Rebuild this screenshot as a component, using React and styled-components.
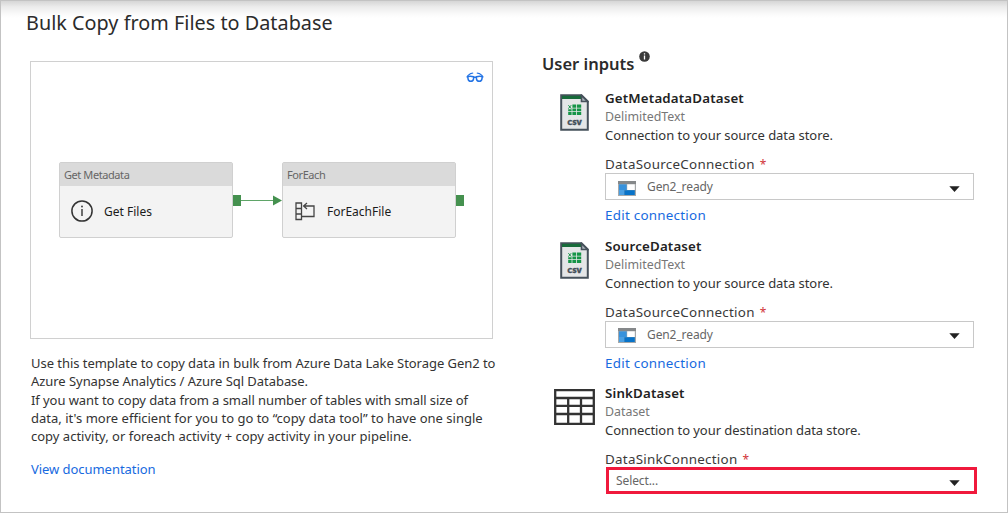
import React from "react";
import styled, { createGlobalStyle } from "styled-components";

const GlobalStyle = createGlobalStyle`
  * { box-sizing: border-box; }
  body { margin: 0; background: #fff; }
`;

const Page = styled.div`
  display: flex;
  width: 1008px;
  height: 513px;
  overflow: hidden;
  border: 1px solid #c3c3c3;
  background: linear-gradient(#d6d6d6 0, #ececec 6px, #fafafa 13px, #fff 17px);
  font-family: "Noto Sans", "Open Sans", sans-serif;
  font-size: 13px;
  color: #333;
  white-space: nowrap;
`;

const Left = styled.section`
  width: 511px;
  padding: 8px 0 0 25px;
`;

const Title = styled.h1`
  margin: 0;
  height: 52px;
  line-height: 27px;
  font-size: 19.8px;
  font-weight: 400;
  letter-spacing: 0.03px;
  color: #2b2b2b;
`;

const Canvas = styled.div`
  position: relative;
  margin-left: 4px;
  width: 463px;
  height: 278px;
  border: 1px solid #d0d0d0;
  background: #fff;
`;

const Glasses = styled.svg`
  position: absolute;
  left: 435px;
  top: 9px;
`;

const Node = styled.div`
  position: absolute;
  left: ${(p) => p.$x}px;
  top: 100px;
  width: 174px;
  height: 76px;
  border: 1px solid #d0d0d0;
  border-radius: 2px;
  background: #f3f3f3;
`;

const NodeHead = styled.div`
  height: 23px;
  padding-left: 4px;
  line-height: 24px;
  background: #dadada;
  color: #666;
  font-size: 11px;
  letter-spacing: -0.42px;
`;

const NodeBody = styled.div`
  display: flex;
  align-items: center;
  height: 50px;
  padding-left: 10px;
  color: #1b1b1b;
  font-size: 12px;
  svg { margin-right: 10px; }
`;

const Port = styled.span`
  position: absolute;
  left: ${(p) => p.$x}px;
  top: 133px;
  width: 8px;
  height: 11px;
  background: #45914f;
`;

const Arrow = styled.svg`
  position: absolute;
  left: 210px;
  top: 133px;
`;

const Description = styled.div`
  margin: 15px 0 0 5px;
`;

const Line = styled.div`
  height: 18.3px;
  line-height: 18.3px;
  letter-spacing: ${(p) => p.$ls || 0}px;
`;

const Link = styled.a`
  display: block;
  height: 18px;
  line-height: 18px;
  color: #176ae0;
`;

const DocLink = styled(Link)`
  margin: 15px 0 0 5px;
  letter-spacing: -0.05px;
`;

const Right = styled.section`
  flex: 1;
  padding-top: 50px;
`;

const Heading = styled.h2`
  display: flex;
  margin: 0;
  height: 38px;
  padding-left: 30px;
  line-height: 26px;
  font-size: 16.5px;
  font-weight: 600;
  color: #2b2b2b;
  svg { margin-left: 5px; }
`;

const Dataset = styled.article`
  display: grid;
  grid-template-columns: 93px 371px;
  height: 147.5px;
`;

const IconCell = styled.div`
  padding: ${(p) => p.$pad};
  svg { display: block; }
`;

const Name = styled.div`
  height: 19px;
  line-height: 19px;
  font-size: 13.3px;
  font-weight: 600;
  color: #222;
  letter-spacing: 0.17px;
`;

const Kind = styled.div`
  height: 18px;
  line-height: 18px;
  font-size: 12.4px;
  color: #777;
`;

const Info = styled.div`
  height: 18px;
  line-height: 18px;
  letter-spacing: -0.05px;
`;

const Label = styled.div`
  height: 29px;
  padding-top: 11px;
  line-height: 18px;
  font-size: 13.4px;
  letter-spacing: 0.27px;
  color: #3a3a3a;
`;

const Required = styled.span`
  margin-left: 5px;
  font-size: 12px;
  color: #d13438;
`;

const Select = styled.div`
  display: flex;
  align-items: center;
  justify-content: space-between;
  width: ${(p) => (p.$alert ? 371 : 369)}px;
  height: 27px;
  margin-top: ${(p) => (p.$alert ? -1 : 0)}px;
  margin-left: ${(p) => (p.$alert ? 1 : 0)}px;
  padding: ${(p) => (p.$alert ? "0 14px 0 7px" : "0 13px 0 12px")};
  border: ${(p) => (p.$alert ? "3px solid #f0193c" : "1px solid #c8c8c8")};
  color: #666;
  font-size: 12px;
`;

const Value = styled.span`
  display: flex;
  align-items: center;
  letter-spacing: -0.1px;
  svg { margin: 3px 11px 0 0; }
`;

const Caret = styled.svg`
  margin-top: 4px;
`;

const EditLink = styled(Link)`
  margin-top: 6px;
  font-size: 13.4px;
  letter-spacing: 0.25px;
`;

const CsvIcon = () => (
  <svg width="29" height="37" viewBox="0 0 29 37">
    <path d="M1.2 1.2H21.5L27.8 7.5V35.8H1.2Z" fill="#e4e6e7" stroke="#46515b" strokeWidth="2" />
    <path d="M2 1.8H21.5V5H2Z" fill="#176b3a" />
    <path d="M21.5 1.5V7.5H27.5Z" fill="#aab4ba" stroke="#46515b" strokeWidth="1.6" />
    <path
      d="M12.4 10.6h3.8v3.2h-3.8zM17 10.6h4.2v3.2H17zM12.4 14.6h3.8v2.6h-3.8zM17 14.6h4.2v2.6H17zM8.2 18h3.4v3H8.2zM12.4 18h3.8v3h-3.8zM17 18h4.2v3H17zM8.2 15.2h3.4v2H8.2z"
      fill="#159447"
    />
    <path d="M8.4 11.2L11.2 14.6M11.2 11.2L8.4 14.6" stroke="#159447" strokeWidth="1" />
    <text x="14.5" y="31.4" textAnchor="middle" fontFamily="Noto Sans, sans-serif" fontWeight="900" fontSize="7.6" fill="#46515b" stroke="#46515b" strokeWidth="0.3">CSV</text>
  </svg>
);

const TableIcon = () => (
  <svg width="41" height="36" viewBox="0 0 41 36" fill="none" stroke="#333" strokeWidth="2.3">
    <path d="M1.2 1.2H39.8V34.8H1.2Z" />
    <path d="M1 9H40M1 16.8H40M1 25H40M14.2 9V35M27 9V35" />
  </svg>
);

const StorageIcon = () => (
  <svg width="18" height="15" viewBox="0 0 18 15">
    <path d="M0 0H18V15H0Z" fill="#a5a8aa" />
    <path d="M0 0H18V3H0Z" fill="#85888a" />
    <path d="M1 3.3H8.7V9H1Z" fill="#3892dc" />
    <path d="M9.2 3.3H16.8V9H9.2Z" fill="#fff" />
    <path d="M1 9H6.3V14H1Z" fill="#4ba0e3" />
    <path d="M6.3 9.2H16.8V14H6.3Z" fill="#0873c9" />
  </svg>
);

const CaretIcon = () => (
  <Caret width="11" height="6" viewBox="0 0 11 6">
    <path d="M0.3 0.2H10.7L5.5 6Z" fill="#222" />
  </Caret>
);

const DatasetInput = ({ icon, pad, name, kind, info, label, value }) => (
  <Dataset>
    <IconCell $pad={pad}>{icon}</IconCell>
    <div>
      <Name>{name}</Name>
      <Kind>{kind}</Kind>
      <Info>{info}</Info>
      <Label>{label}<Required>*</Required></Label>
      <Select $alert={!value}>
        <Value>{value ? <><StorageIcon />{value}</> : "Select..."}</Value>
        <CaretIcon />
      </Select>
      {value && <EditLink>Edit connection</EditLink>}
    </div>
  </Dataset>
);

export default function App() {
  return (
    <>
      <GlobalStyle />
      <Page>
        <Left>
          <Title>Bulk Copy from Files to Database</Title>
          <Canvas>
            <Glasses width="18" height="12" viewBox="0 0 18 12" fill="none" stroke="#2474e5" strokeWidth="1.5">
              <path d="M1.8 5.6Q4.6 4.8 7.6 5.8V7.6C7.2 11.2 2.4 11.2 2 7.6ZM16.2 5.6Q13.4 4.8 10.4 5.8V7.6C10.8 11.2 15.6 11.2 16 7.6ZM7.6 6.2H10.4" />
              <path d="M0.5 5.8H2M16 5.8H17.5M1.4 5L4.6 2.6L7.2 2M16.6 5L13.4 2.6L10.8 2" strokeWidth="1.2" />
            </Glasses>
            <Node $x={28}>
              <NodeHead>Get Metadata</NodeHead>
              <NodeBody>
                <svg width="24" height="24" viewBox="0 0 24 24">
                  <circle cx="12" cy="12" r="10.1" fill="none" stroke="#333" strokeWidth="1.5" />
                  <path d="M12 10V17" stroke="#333" strokeWidth="1.4" />
                  <circle cx="12" cy="7.5" r="0.9" fill="#333" />
                </svg>
                Get Files
              </NodeBody>
            </Node>
            <Arrow width="41" height="11" viewBox="0 0 41 11">
              <path d="M0 5.5H33" stroke="#5fa568" strokeWidth="1" />
              <path d="M32 0.6L41 5.5L32 10.4Z" fill="#45914f" />
            </Arrow>
            <Node $x={251}>
              <NodeHead>ForEach</NodeHead>
              <NodeBody>
                <svg width="24" height="24" viewBox="0 0 24 24" fill="none" stroke="#444" strokeWidth="1.3">
                  <path d="M3 4H8.5V20.5H3ZM3 9.5H8.5M3 15H8.5M8.5 17.5H21V7H11M14 4L10.6 7L14 10" />
                </svg>
                ForEachFile
              </NodeBody>
            </Node>
            <Port $x={202} />
            <Port $x={425} />
          </Canvas>
          <Description>
            <Line $ls={-0.04}>Use this template to copy data in bulk from Azure Data Lake Storage Gen2 to</Line>
            <Line $ls={-0.05}>Azure Synapse Analytics / Azure Sql Database.</Line>
            <Line $ls={-0.07}>If you want to copy data from a small number of tables with small size of</Line>
            <Line $ls={0.01}>data, it's more efficient for you to go to “copy data tool” to have one single</Line>
            <Line>copy activity, or foreach activity + copy activity in your pipeline.</Line>
          </Description>
          <DocLink>View documentation</DocLink>
        </Left>
        <Right>
          <Heading>
            User inputs
            <svg width="11" height="11" viewBox="0 0 11 11">
              <circle cx="5.5" cy="5.5" r="5.3" fill="#3a3a3a" />
              <path d="M5.5 4.6V8.6M5.5 2.2V3.6" stroke="#fff" strokeWidth="1.3" />
            </svg>
          </Heading>
          <DatasetInput icon={<CsvIcon />} pad="5px 0 0 48px" name="GetMetadataDataset" kind="DelimitedText" info="Connection to your source data store." label="DataSourceConnection" value="Gen2_ready" />
          <DatasetInput icon={<CsvIcon />} pad="5px 0 0 48px" name="SourceDataset" kind="DelimitedText" info="Connection to your source data store." label="DataSourceConnection" value="Gen2_ready" />
          <DatasetInput icon={<TableIcon />} pad="5px 0 0 42px" name="SinkDataset" kind="Dataset" info="Connection to your destination data store." label="DataSinkConnection" />
        </Right>
      </Page>
    </>
  );
}
